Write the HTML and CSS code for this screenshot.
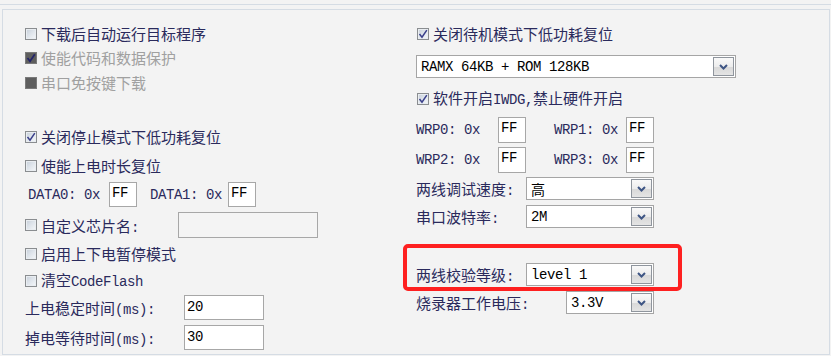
FILE: index.html
```html
<!DOCTYPE html>
<html lang="zh-CN">
<head>
<meta charset="utf-8">
<title>Options</title>
<link rel="stylesheet" href="styles.css">
</head>
<body>
<div class="topline"></div>
<div class="frame">
  <div class="cols">
    <div class="col">
      <div class="row cb-row"><span class="cb"></span><span>下载后自动运行目标程序</span></div>
      <div class="row cb-row gap-4 disabled"><span class="cb dis"><svg viewBox="0 0 10 10"><path d="M1.5 5 L4 8.2 L8.8 1.2" fill="none" stroke="#23246a" stroke-width="1.7"/></svg></span><span>使能代码和数据保护</span></div>
      <div class="row cb-row gap-5 disabled"><span class="cb dis"></span><span>串口免按键下载</span></div>
      <div class="row cb-row gap-34"><span class="cb"><svg viewBox="0 0 10 10"><path d="M1.5 5 L4 8.2 L8.8 1.2" fill="none" stroke="#3a3f8a" stroke-width="1.5"/></svg></span><span>关闭停止模式下低功耗复位</span></div>
      <div class="row cb-row gap-9"><span class="cb"></span><span>使能上电时长复位</span></div>
      <div class="row field-row gap-6">
        <span class="mono data-lbl1">DATA0: 0x</span><span class="field mono">FF</span>
        <span class="mono data-lbl2">DATA1: 0x</span><span class="field mono">FF</span>
      </div>
      <div class="row name-row gap-5">
        <span class="name-lbl"><span class="cb"></span><span>自定义芯片名<span class="mono">:</span></span></span>
        <span class="name-field"></span>
      </div>
      <div class="row cb-row gap-6"><span class="cb"></span><span>启用上下电暂停模式</span></div>
      <div class="row cb-row gap-7"><span class="cb"></span><span>清空<span class="mono">CodeFlash</span></span></div>
      <div class="row field-row gap-4"><span class="time-lbl">上电稳定时间<span class="mono">(ms):</span></span><span class="field time-field mono">20</span></div>
      <div class="row field-row gap-5"><span class="time-lbl">掉电等待时间<span class="mono">(ms):</span></span><span class="field time-field mono">30</span></div>
    </div>
    <div class="col col-right">
      <div class="row cb-row"><span class="cb"><svg viewBox="0 0 10 10"><path d="M1.5 5 L4 8.2 L8.8 1.2" fill="none" stroke="#3a3f8a" stroke-width="1.5"/></svg></span><span>关闭待机模式下低功耗复位</span></div>
      <div class="row gap-11"><div class="select sel-wide"><span class="val mono">RAMX 64KB + ROM 128KB</span><span class="btn"><svg viewBox="0 0 9 6"><polyline points="1,1 4.5,4.5 8,1" fill="none" stroke="#3e5584" stroke-width="2"/></svg></span></div></div>
      <div class="row cb-row gap-11"><span class="cb"><svg viewBox="0 0 10 10"><path d="M1.5 5 L4 8.2 L8.8 1.2" fill="none" stroke="#3a3f8a" stroke-width="1.5"/></svg></span><span>软件开启<span class="mono">IWDG,</span>禁止硬件开启</span></div>
      <div class="row wrp-row gap-8">
        <span class="mono wrp-lbl1">WRP0: 0x</span><span class="field wrp-field mono">FF</span>
        <span class="mono wrp-lbl2">WRP1: 0x</span><span class="field wrp-field mono">FF</span>
      </div>
      <div class="row wrp-row gap-4">
        <span class="mono wrp-lbl1">WRP2: 0x</span><span class="field wrp-field mono">FF</span>
        <span class="mono wrp-lbl2">WRP3: 0x</span><span class="field wrp-field mono">FF</span>
      </div>
      <div class="row gap-4"><span class="sel-lbl">两线调试速度<span class="mono">:</span></span><div class="select sel-mid"><span class="val mono">高</span><span class="btn"><svg viewBox="0 0 9 6"><polyline points="1,1 4.5,4.5 8,1" fill="none" stroke="#3e5584" stroke-width="2"/></svg></span></div></div>
      <div class="row gap-5"><span class="sel-lbl">串口波特率<span class="mono">:</span></span><div class="select sel-mid"><span class="val mono">2M</span><span class="btn"><svg viewBox="0 0 9 6"><polyline points="1,1 4.5,4.5 8,1" fill="none" stroke="#3e5584" stroke-width="2"/></svg></span></div></div>
      <div class="row gap-35"><span class="sel-lbl">两线校验等级<span class="mono">:</span></span><div class="select sel-mid"><span class="val mono">level 1</span><span class="btn"><svg viewBox="0 0 9 6"><polyline points="1,1 4.5,4.5 8,1" fill="none" stroke="#3e5584" stroke-width="2"/></svg></span></div></div>
      <div class="row gap-5"><span class="sel-lbl sel-lbl-wide">烧录器工作电压<span class="mono">:</span></span><div class="select sel-narrow"><span class="val mono">3.3V</span><span class="btn"><svg viewBox="0 0 9 6"><polyline points="1,1 4.5,4.5 8,1" fill="none" stroke="#3e5584" stroke-width="2"/></svg></span></div></div>
    </div>
  </div>
</div>
<div class="highlight"></div>
</body>
</html>
```
FILE: styles.css
```css
* { box-sizing: border-box; }
html, body { margin: 0; padding: 0; }
body {
  width: 831px;
  height: 356px;
  overflow: hidden;
  position: relative;
  background: #f3f3f3;
  font-family: "Noto Sans CJK SC", "Noto Sans CJK JP", sans-serif;
  font-size: 15px;
  color: #2a2a5c;
}
.topline {
  margin-top: 4px;
  border-top: 1px solid #d5dce4;
}
.frame {
  margin: 4px 1px 0 2px;
  height: 346px;
  border: 1px solid #d5dce4;
  padding: 14px 0 0 22px;
}
.cols {
  display: grid;
  grid-template-columns: 391px 1fr;
}
.col {
  display: flex;
  flex-direction: column;
  align-items: flex-start;
}
.row {
  display: flex;
  align-items: center;
  white-space: nowrap;
}
.cb-row { height: 20px; line-height: 20px; }
.col-right .cb-row { padding-left: 1px; }

.gap-4 { margin-top: 4px; }
.gap-5 { margin-top: 5px; }
.gap-6 { margin-top: 6px; }
.gap-7 { margin-top: 7px; }
.gap-8 { margin-top: 8px; }
.gap-9 { margin-top: 9px; }
.gap-11 { margin-top: 11px; }
.gap-34 { margin-top: 34px; }
.gap-35 { margin-top: 35px; }

.cb {
  width: 12px;
  height: 12px;
  flex: none;
  margin-right: 4px;
  border: 1px solid #8a8d90;
  background: linear-gradient(135deg, #c6ced8 0%, #dde3ea 45%, #f6f8fa 100%);
  box-shadow: inset 0 0 0 1px #e9edf1;
  display: flex;
  align-items: center;
  justify-content: center;
}
.cb svg { width: 10px; height: 10px; display: block; }
.cb.dis {
  background: #5e5e5e;
  border-color: #7a7a7a;
  box-shadow: none;
}
.disabled { color: #a0a0a0; }

.mono {
  font-family: "Liberation Mono", "Noto Sans CJK SC", monospace;
  font-size: 14px;
  letter-spacing: -0.4px;
}

.field {
  height: 25px;
  width: 28px;
  border: 1px solid #a7a7a7;
  background: #fff;
  color: #000;
  padding: 2px 0 0 2px;
  line-height: 16px;
}
.field-row { height: 25px; }
.data-lbl1 { margin-left: 3px; width: 81px; }
.data-lbl2 { margin-left: 13px; width: 78px; }

.name-row { height: 26px; }
.name-lbl { display: flex; align-items: center; width: 153px; }
.name-field {
  width: 140px;
  height: 26px;
  border: 1px solid #a7a7a7;
  background: #f4f4f4;
}

.time-lbl { width: 159px; }
.time-field { width: 80px; padding: 3px 0 0 2px; }

.wrp-row { height: 26px; }
.wrp-field { height: 26px; }
.wrp-lbl1 { width: 82px; }
.wrp-lbl2 { margin-left: 28px; width: 72px; }

.sel-lbl { width: 110px; }
.sel-lbl-wide { width: 150px; }
.select {
  height: 23px;
  border: 1px solid #a5a5a5;
  background: #fff;
  color: #000;
  display: flex;
  align-items: center;
  padding: 1px 1px 1px 4px;
}
.select .val { flex: 1; }
.sel-wide { width: 320px; }
.sel-mid { width: 128px; }
.sel-narrow { width: 88px; }
.btn {
  width: 21px;
  height: 19px;
  flex: none;
  border: 1px solid #8f959d;
  background: linear-gradient(#f9f9f9 0%, #ededed 50%, #d9d9d9 56%, #e4e4e4 100%);
  display: flex;
  align-items: center;
  justify-content: center;
}
.btn svg { width: 9px; height: 6px; display: block; }

.highlight {
  position: absolute;
  left: 403px;
  top: 244px;
  width: 279px;
  height: 47px;
  border: 4px solid #fe2020;
  border-radius: 5px;
}
```
